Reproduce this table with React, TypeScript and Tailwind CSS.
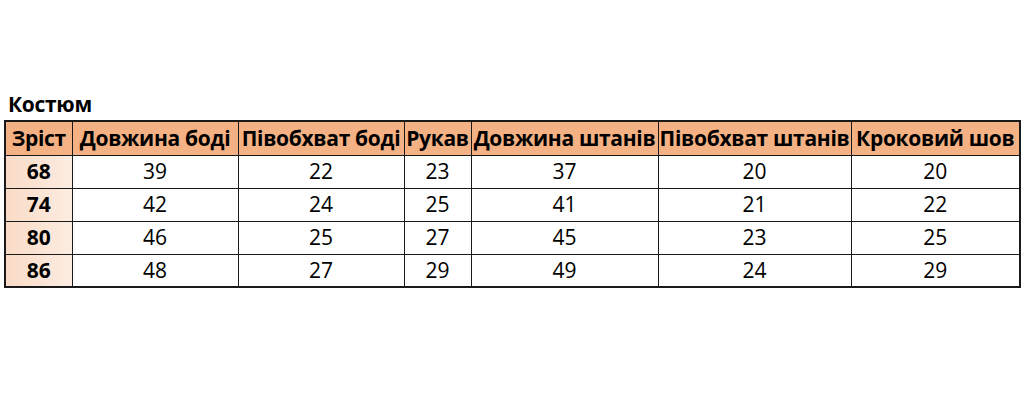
const headers = [
  "Зріст",
  "Довжина боді",
  "Півобхват боді",
  "Рукав",
  "Довжина штанів",
  "Півобхват штанів",
  "Кроковий шов",
];

const widths = ["w-[67px]", "w-[166px]", "w-[166px]", "w-[67px]", "w-[187px]", "w-[193px]", "w-[169px]"];

const rows = [
  ["68", "39", "22", "23", "37", "20", "20"],
  ["74", "42", "24", "25", "41", "21", "22"],
  ["80", "46", "25", "27", "45", "23", "25"],
  ["86", "48", "27", "29", "49", "24", "29"],
];

export default function App() {
  return (
    <div className="h-[406px] w-[1024px] bg-white pl-[4px] pt-[90px] font-['Open_Sans','Noto_Sans',sans-serif] text-black">
      <h1 className="pl-[4px] text-[21px] font-bold leading-[28px] tracking-[-0.3px]">Костюм</h1>
      <table className="mt-[2px] table-fixed border-collapse border-2 border-[#1a1a1a]">
        <colgroup>
          {widths.map((w, i) => (
            <col key={i} className={w} />
          ))}
        </colgroup>
        <thead>
          <tr className="h-[34px] bg-[#f4b183]">
            {headers.map((h) => (
              <th
                key={h}
                className="whitespace-nowrap border border-[#1a1a1a] px-0 text-center text-[21px] font-bold leading-none tracking-[-0.3px]"
              >
                {h}
              </th>
            ))}
          </tr>
        </thead>
        <tbody>
          {rows.map((r) => (
            <tr key={r[0]} className="h-[33px]">
              {r.map((v, i) =>
                i === 0 ? (
                  <td
                    key={i}
                    className="border border-[#1a1a1a] bg-gradient-to-r from-[#f9dbc6] to-[#fcece1] text-center text-[21px] font-bold leading-none"
                  >
                    {v}
                  </td>
                ) : (
                  <td key={i} className="border border-[#1a1a1a] text-center text-[21px] leading-none">
                    {v}
                  </td>
                )
              )}
            </tr>
          ))}
        </tbody>
      </table>
    </div>
  );
}
